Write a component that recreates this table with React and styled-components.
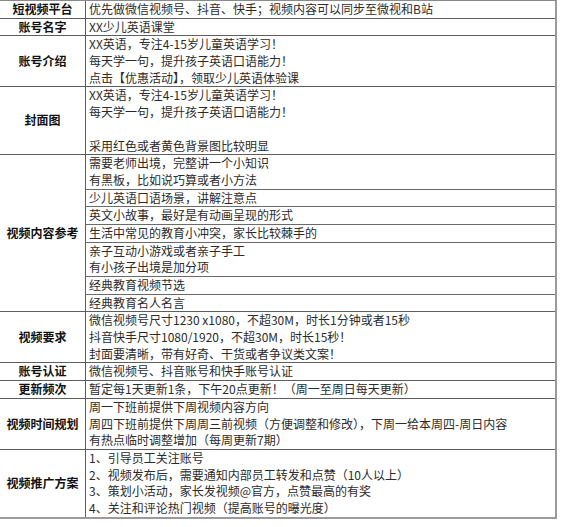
import React from 'react';
import styled, { createGlobalStyle } from 'styled-components';

const GlobalStyle = createGlobalStyle`
  html, body {
    margin: 0;
    padding: 0;
    background: #ffffff;
  }
  body {
    font-family: "Noto Sans CJK SC", "Microsoft YaHei", sans-serif;
  }
`;

const LINE = '16.7px';

const Table = styled.div`
  width: 557px;
  border-top: 1px solid #8a8a8a;
  border-right: 2px solid #9a9a9a;
  border-bottom: 2px solid #9a9a9a;
  box-sizing: border-box;
`;

const Section = styled.div`
  display: flex;
  & + & {
    border-top: 1px solid #5e5e5e;
  }
`;

const Label = styled.div`
  flex: 0 0 85px;
  display: flex;
  align-items: center;
  justify-content: center;
  border-right: 1px solid #5e5e5e;
  font-size: 12px;
  line-height: ${LINE};
  font-weight: 700;
  color: #111111;
  white-space: nowrap;
`;

const Body = styled.div`
  flex: 1;
  display: flex;
  flex-direction: column;
  min-width: 0;
`;

const Cell = styled.div`
  padding-left: 3px;
  font-size: 12px;
  line-height: ${LINE};
  color: #2b2b2b;
  white-space: nowrap;
  & + & {
    border-top: 1px solid #6a6a6a;
  }
`;

const Line = styled.div`
  height: ${LINE};
`;

const rows = [
  { label: '短视频平台', cells: [['优先做微信视频号、抖音、快手；视频内容可以同步至微视和B站']] },
  { label: '账号名字', cells: [['XX少儿英语课堂']] },
  {
    label: '账号介绍',
    cells: [[
      'XX英语，专注4-15岁儿童英语学习！',
      '每天学一句，提升孩子英语口语能力！',
      '点击【优惠活动】，领取少儿英语体验课',
    ]],
  },
  {
    label: '封面图',
    cells: [[
      'XX英语，专注4-15岁儿童英语学习！',
      '每天学一句，提升孩子英语口语能力！',
      '',
      '采用红色或者黄色背景图比较明显',
    ]],
  },
  {
    label: '视频内容参考',
    cells: [
      ['需要老师出境，完整讲一个小知识', '有黑板，比如说巧算或者小方法'],
      ['少儿英语口语场景，讲解注意点'],
      ['英文小故事，最好是有动画呈现的形式'],
      ['生活中常见的教育小冲突，家长比较棘手的'],
      ['亲子互动小游戏或者亲子手工', '有小孩子出境是加分项'],
      ['经典教育视频节选'],
      ['经典教育名人名言'],
    ],
  },
  {
    label: '视频要求',
    cells: [[
      '微信视频号尺寸1230 x1080，不超30M，时长1分钟或者15秒',
      '抖音快手尺寸1080/1920，不超30M，时长15秒！',
      '封面要清晰，带有好奇、干货或者争议类文案！',
    ]],
  },
  { label: '账号认证', cells: [['微信视频号、抖音账号和快手账号认证']] },
  { label: '更新频次', cells: [['暂定每1天更新1条，下午20点更新！（周一至周日每天更新）']] },
  {
    label: '视频时间规划',
    cells: [[
      '周一下班前提供下周视频内容方向',
      '周四下班前提供下周周三前视频（方便调整和修改），下周一给本周四-周日内容',
      '有热点临时调整增加（每周更新7期）',
    ]],
  },
  {
    label: '视频推广方案',
    cells: [[
      '1、引导员工关注账号',
      '2、视频发布后，需要通知内部员工转发和点赞（10人以上）',
      '3、策划小活动，家长发视频@官方，点赞最高的有奖',
      '4、关注和评论热门视频（提高账号的曝光度）',
    ]],
  },
];

export default function App() {
  return (
    <>
      <GlobalStyle />
      <Table>
        {rows.map((row) => (
          <Section key={row.label}>
            <Label>{row.label}</Label>
            <Body>
              {row.cells.map((lines, i) => (
                <Cell key={i}>
                  {lines.map((text, j) => (
                    <Line key={j}>{text}</Line>
                  ))}
                </Cell>
              ))}
            </Body>
          </Section>
        ))}
      </Table>
    </>
  );
}
